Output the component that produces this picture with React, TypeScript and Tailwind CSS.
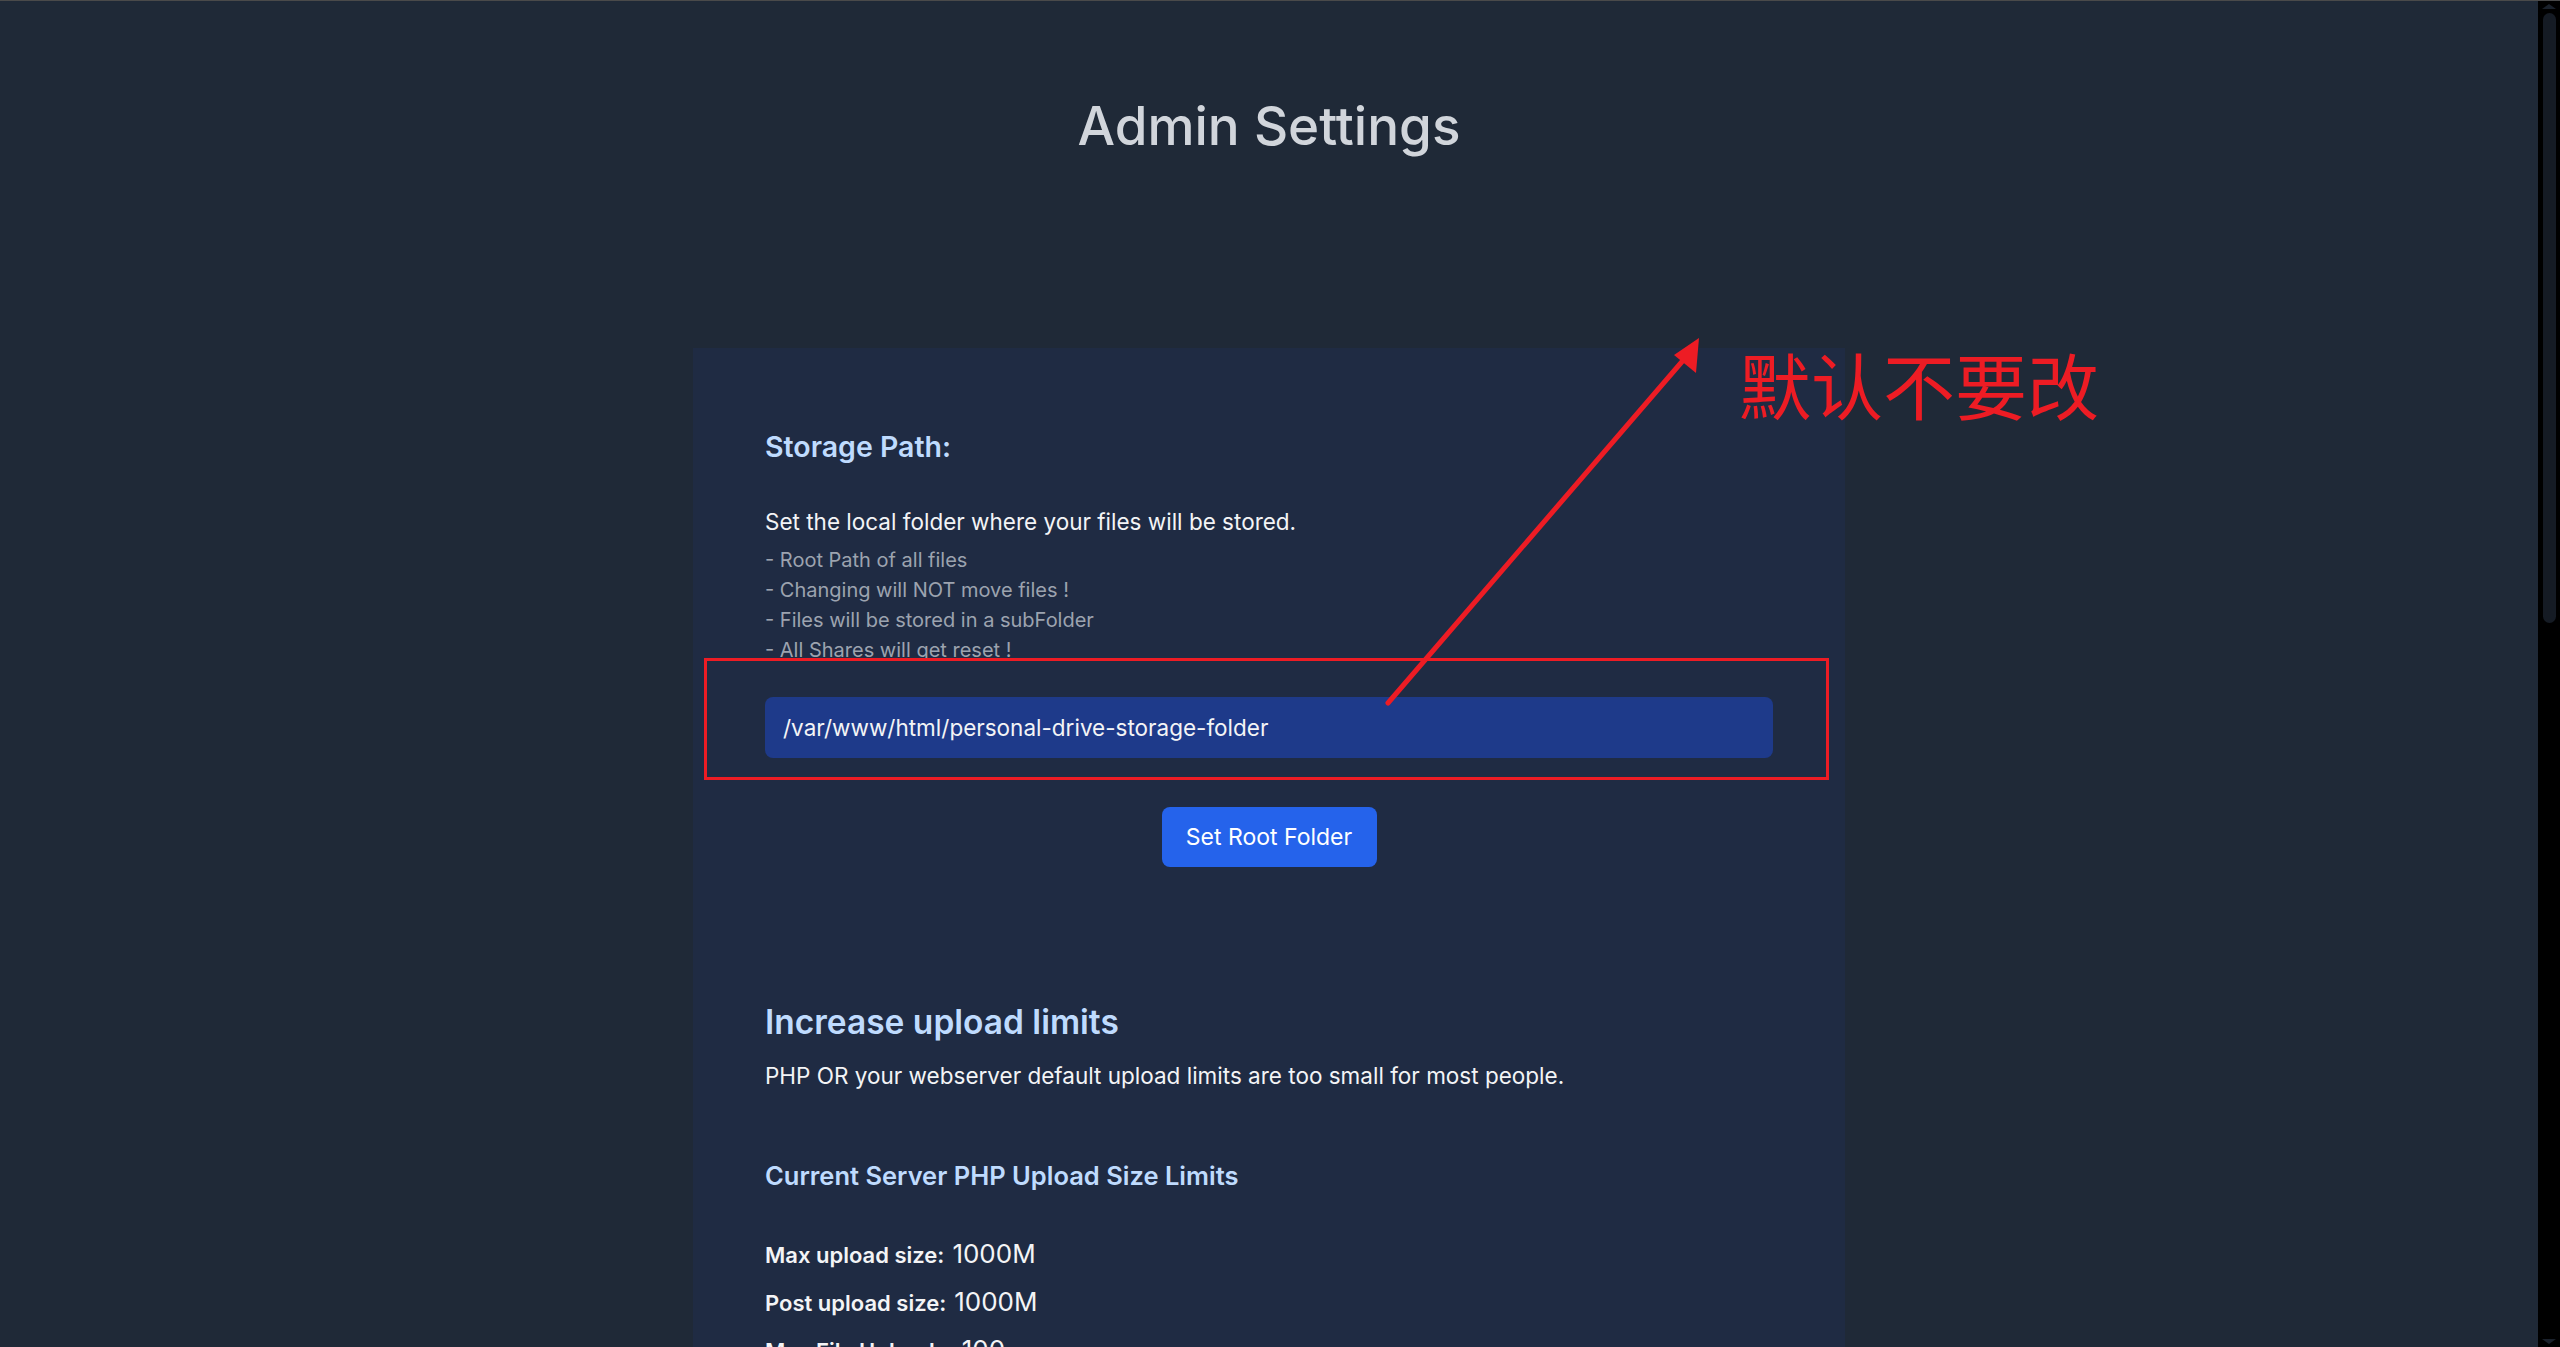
import { useState } from 'react'

const sans = "font-['Inter','Noto_Sans',sans-serif]"

function Annotation() {
  return (
    <>
      {/* red arrow drawn over the page */}
      <svg className="absolute left-0 top-0 pointer-events-none" width="2538" height="1347">
        <line x1="1388" y1="702" x2="1686" y2="356" stroke="#ed1c24" strokeWidth="5" strokeLinecap="round" />
        <polygon points="1699,337 1696,372 1674,354" fill="#ed1c24" />
      </svg>
      <div className="absolute left-[1739px] top-[346px] text-[72px] leading-none text-[#ed1c24] font-['Noto_Sans_CJK_SC',sans-serif] font-normal whitespace-nowrap">
        默认不要改
      </div>
    </>
  )
}

function Scrollbar() {
  return (
    <div className="w-[22px] shrink-0 bg-black flex flex-col items-center">
      <div className="mt-[3px] w-0 h-0 border-x-[7px] border-x-transparent border-b-[5px] border-b-[#1a212b]" />
      <div className="mt-[4px] w-[13px] h-[610px] rounded-full bg-[#151b24]" />
      <div className="mt-auto mb-[3px] w-0 h-0 border-x-[7px] border-x-transparent border-t-[5px] border-t-[#1a212b]" />
    </div>
  )
}

export default function App() {
  const [path, setPath] = useState('/var/www/html/personal-drive-storage-folder')

  return (
    <div className={`relative h-screen overflow-hidden flex bg-[#1f2937] border-t border-[#4a4a4a] ${sans}`}>
      <div className="flex-1 flex flex-col items-center pb-40">
        <h1 className="pt-[93px] text-[53px] leading-[64px] font-medium text-[#d1d5db]">Admin Settings</h1>

        <div className="mt-[190px] w-[1152px] shrink-0 bg-[#1f2b43] px-[72px] pt-[81px] pb-32">
          <h2 className="text-[28.5px] leading-[36px] font-semibold text-[#bfdbfe]">Storage Path:</h2>
          <p className="mt-[42px] text-[22.5px] leading-[30px] text-[#f3f4f6]">
            Set the local folder where your files will be stored.
          </p>
          <div className="mt-2 h-[113px] overflow-hidden text-[20px] leading-[30px] text-[#9ca3af]">
            <div>- Root Path of all files</div>
            <div>- Changing will NOT move files !</div>
            <div>- Files will be stored in a subFolder</div>
            <div>- All Shares will get reset !</div>
          </div>

          <div className="relative mt-[39px]">
            <input
              value={path}
              onChange={(e) => setPath(e.target.value)}
              className="w-full h-[61px] rounded-lg bg-[#1e3a8a] px-[18px] text-[22.5px] text-[#f3f4f6] outline-none"
            />
            {/* annotation frame */}
            <div className="absolute -top-[39px] -bottom-[22px] -left-[61px] -right-[56px] border-[3px] border-[#ed1c24] pointer-events-none" />
          </div>

          <div className="mt-[49px] flex justify-center">
            <button className="h-[60px] w-[215px] rounded-lg bg-[#2563eb] text-[23px] text-white">Set Root Folder</button>
          </div>

          <h2 className="mt-[133px] text-[33.5px] leading-[44px] font-semibold text-[#bfdbfe]">Increase upload limits</h2>
          <p className="mt-[17px] text-[22.5px] leading-[30px] text-[#f3f4f6]">
            PHP OR your webserver default upload limits are too small for most people.
          </p>

          <h3 className="mt-[67px] text-[25.5px] leading-[36px] font-semibold text-[#bfdbfe]">
            Current Server PHP Upload Size Limits
          </h3>

          <div className="mt-[44px] flex flex-col gap-[15px] text-[#f3f4f6]">
            {[
              ['Max upload size:', '1000M'],
              ['Post upload size:', '1000M'],
              ['Max File Uploads:', '100'],
            ].map(([label, value]) => (
              <div key={label} className="flex items-baseline gap-2 leading-[32px]">
                <span className="text-[22px] font-semibold">{label}</span>
                <span className="text-[26px]">{value}</span>
              </div>
            ))}
          </div>
        </div>
      </div>
      <Scrollbar />
      <Annotation />
    </div>
  )
}
